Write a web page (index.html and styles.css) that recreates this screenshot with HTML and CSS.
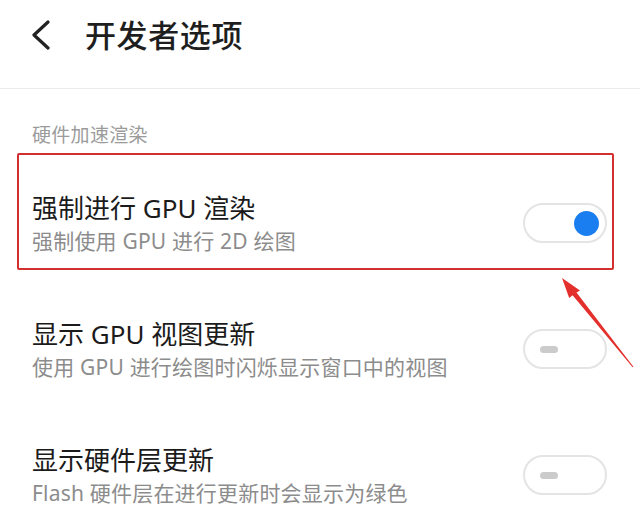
FILE: index.html
```html
<!DOCTYPE html>
<html lang="zh-CN">
<head>
<meta charset="utf-8">
<title>开发者选项</title>
<link rel="stylesheet" href="styles.css">
</head>
<body>
<div class="page">
  <header class="header">
    <svg class="back" viewBox="0 0 22 30" width="22" height="30" aria-hidden="true">
      <polyline points="18,2 4,15 18,28" fill="none" stroke="#222" stroke-width="3.2" stroke-linecap="round" stroke-linejoin="round"/>
    </svg>
    <h1 class="title">开发者选项</h1>
  </header>

  <div class="section-label">硬件加速渲染</div>

  <div class="row highlighted">
    <div class="text">
      <div class="row-title">强制进行 GPU 渲染</div>
      <div class="row-sub">强制使用 GPU 进行 2D 绘图</div>
    </div>
    <div class="toggle on"><span class="knob"></span></div>
    <div class="mark-box"></div>
  </div>

  <div class="row">
    <div class="text">
      <div class="row-title">显示 GPU 视图更新</div>
      <div class="row-sub">使用 GPU 进行绘图时闪烁显示窗口中的视图</div>
    </div>
    <div class="toggle"><span class="knob"></span></div>
  </div>

  <div class="row">
    <div class="text">
      <div class="row-title">显示硬件层更新</div>
      <div class="row-sub">Flash 硬件层在进行更新时会显示为绿色</div>
    </div>
    <div class="toggle"><span class="knob"></span></div>
  </div>

  <svg class="arrow" viewBox="0 0 640 526" width="640" height="526" aria-hidden="true">
    <polygon points="562,278 580,290.5 576.5,292.6 633.4,366.7 632.6,367.3 572.6,295.3 569.2,298" fill="#e3302c"/>
  </svg>
</div>
</body>
</html>
```

FILE: styles.css
```css
* { box-sizing: border-box; }

html, body {
  margin: 0;
  padding: 0;
  background: #ffffff;
}

body {
  font-family: "Noto Sans", "Noto Sans CJK SC", sans-serif;
  color: #1b1b1b;
}

.page {
  position: relative;
  width: 640px;
  height: 526px;
  overflow: hidden;
}

.header {
  height: 89px;
  display: flex;
  align-items: center;
  padding: 0 0 18px 30px;
  border-bottom: 1px solid #ececec;
}

.back {
  display: block;
  flex: none;
}

.title {
  margin: 0 0 0 33px;
  font-size: 31px;
  font-weight: 500;
  line-height: 40px;
  color: #1e1e1e;
  letter-spacing: 0.6px;
}

.section-label {
  padding: 34px 32px 0;
  font-size: 19px;
  line-height: 24px;
  color: #9b9b9b;
  letter-spacing: 0.3px;
  margin-bottom: 13px;
}

.row {
  position: relative;
  height: 126px;
  display: flex;
  align-items: center;
  justify-content: space-between;
  padding: 0 33px 0 32px;
}

.text {
  display: flex;
  flex-direction: column;
}

.row-title {
  font-size: 26px;
  line-height: 32px;
  color: #1b1b1b;
}

.row-sub {
  margin-top: 3px;
  font-size: 21px;
  line-height: 28px;
  letter-spacing: 0.2px;
  color: #8c8c8c;
}

.toggle {
  position: relative;
  flex: none;
  width: 84px;
  height: 40px;
  border: 2px solid #e4e4e4;
  border-radius: 20px;
  background: #ffffff;
  display: flex;
  align-items: center;
  padding-left: 15px;
}

.toggle .knob {
  display: block;
  width: 18px;
  height: 7px;
  border-radius: 4px;
  background: #cbcbcb;
}

.toggle.on {
  justify-content: flex-end;
  padding-left: 0;
  padding-right: 6px;
}

.toggle.on .knob {
  width: 25px;
  height: 25px;
  border-radius: 50%;
  background: #1b7ef0;
}

.mark-box {
  position: absolute;
  top: -7px;
  left: 17px;
  right: 26px;
  bottom: 16px;
  border: 2px solid #d2302e;
  border-radius: 2px;
  pointer-events: none;
}

.arrow {
  position: absolute;
  left: 0;
  top: 0;
  pointer-events: none;
}
```
